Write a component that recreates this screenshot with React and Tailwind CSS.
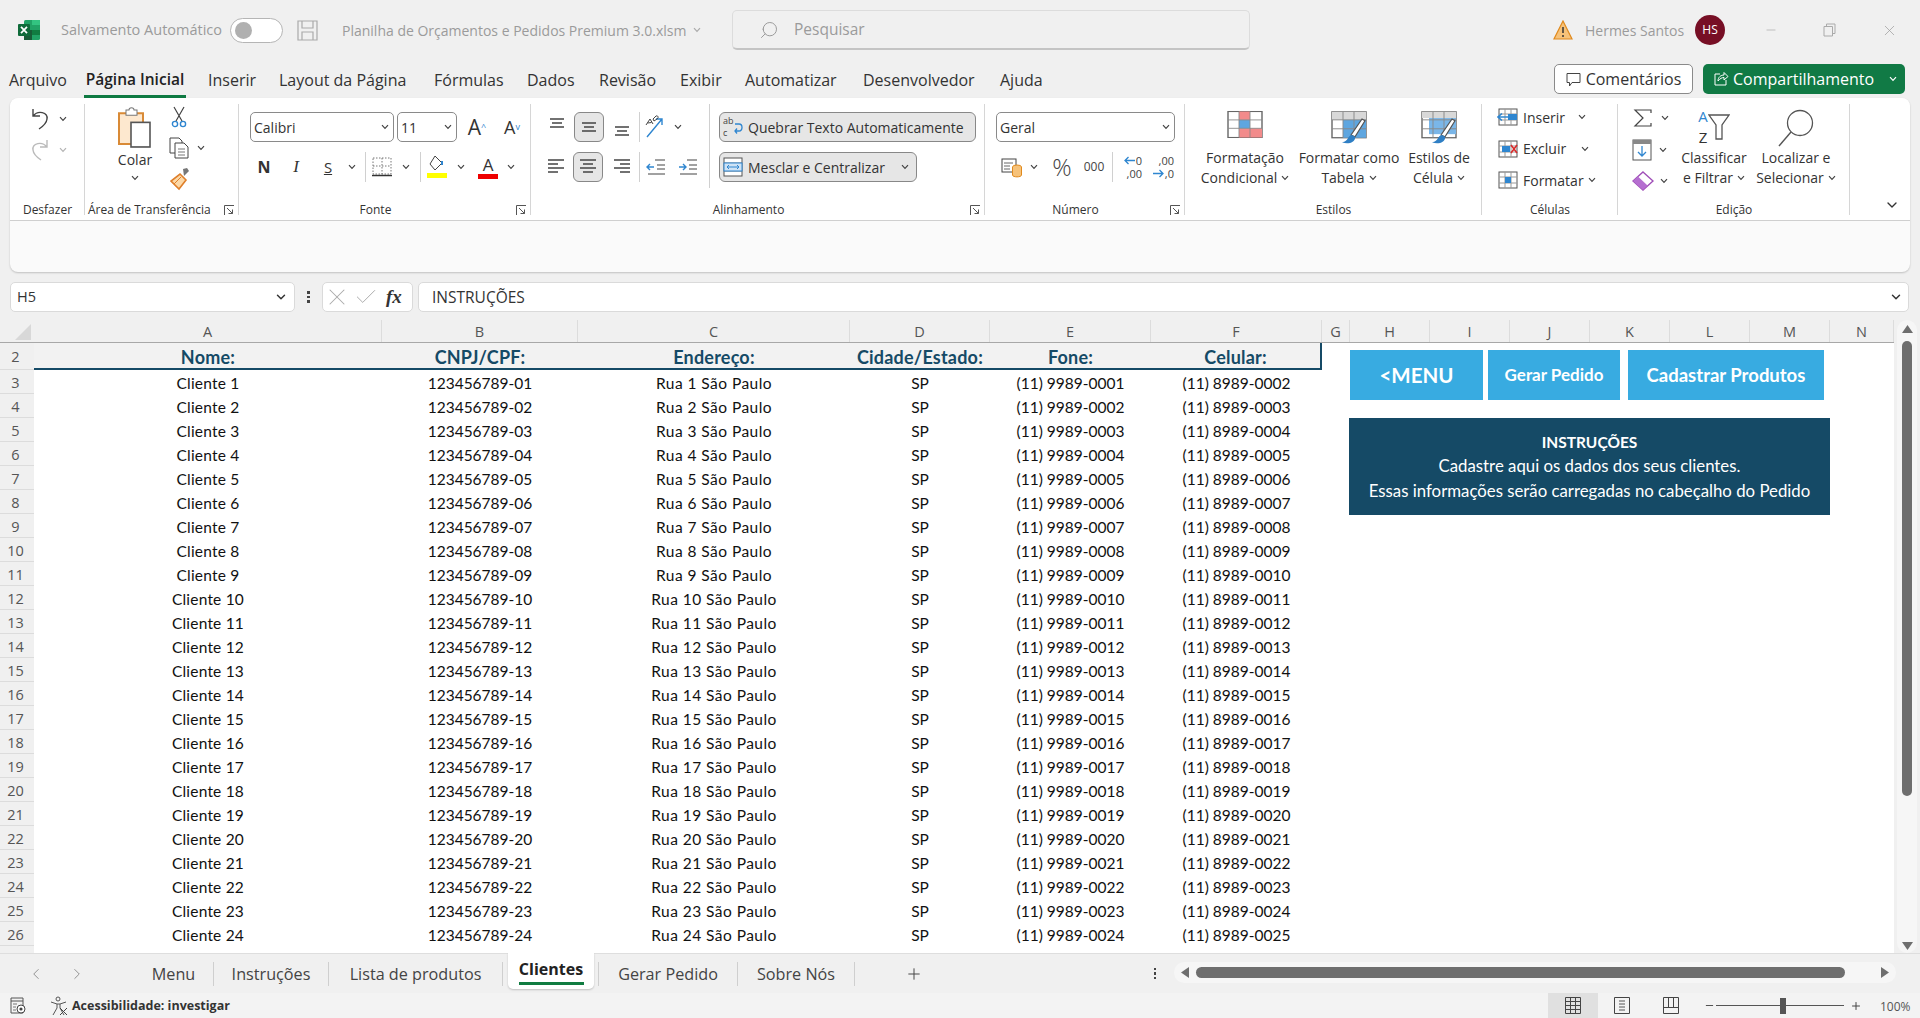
import { ChevronDown, ChevronLeft, ChevronRight, Plus, X, Check, Minus, Search } from "lucide-react";

const rows = Array.from({ length: 24 }, (_, i) => i + 1);
const pad = (n) => String(n).padStart(2, "0");
const pad4 = (n) => String(n).padStart(4, "0");

const colHeads = [
  ["A", "w-[348px]"],
  ["B", "w-[196px]"],
  ["C", "w-[272px]"],
  ["D", "w-[140px]"],
  ["E", "w-[161px]"],
  ["F", "w-[171px]"],
  ["G", "w-[28px]"],
  ["H", "w-[80px]"],
  ["I", "w-[80px]"],
  ["J", "w-[80px]"],
  ["K", "w-[80px]"],
  ["L", "w-[80px]"],
  ["M", "w-[80px]"],
  ["N", "w-[64px]"],
];

const Chev = ({ className = "" }) => (
  <svg width="8" height="6" viewBox="0 0 8 6" className={`shrink-0 ${className}`}>
    <path d="M1 1.2 L4 4.4 L7 1.2" fill="none" stroke="#444" strokeWidth="1.2" />
  </svg>
);

const Launcher = () => (
  <svg width="11" height="11" viewBox="0 0 11 11" className="shrink-0">
    <path d="M0.5 10 V0.5 H10 M3 3 L8.5 8.5 M8.5 4.5 V8.5 H4.5" fill="none" stroke="#555" strokeWidth="1" />
  </svg>
);

const Group = ({ w, label, launcher, left, children }) => (
  <div className={`${w} shrink-0 h-[111px] border-r border-[#d6d6d6]`}>
    <div className="h-[98px]">{children}</div>
    {left ? (
      <div className="h-[13px] flex items-start justify-between pl-[3px] pr-[3px] text-[12px] leading-[16px] text-[#333] whitespace-nowrap">
        <span>{label}</span>
        <span className="pt-[3px]"><Launcher /></span>
      </div>
    ) : (
      <div className="h-[13px] grid grid-cols-[1fr_auto_1fr] text-[12px] leading-[16px] text-[#333] whitespace-nowrap pr-[3px]">
        <span />
        {launcher ? <span className="mr-[15px]">{label}</span> : <span className="ml-[4px]">{label}</span>}
        {launcher ? <span className="justify-self-end pt-[3px]"><Launcher /></span> : <span />}
      </div>
    )}
  </div>
);

const Slot = ({ w, children, className = "" }) => (
  <div className={`${w} shrink-0 flex items-center justify-center ${className}`}>{children}</div>
);

const SelectBox = ({ w, label }) => (
  <div className={`${w} h-[30px] shrink-0 flex items-center justify-between pl-[3px] pr-[4px] bg-white border border-[#8a8a8a] rounded-[5px] text-[14px] text-[#333]`}>
    <span>{label}</span>
    <Chev />
  </div>
);

const Sep = ({ className = "" }) => <div className={`w-px h-[30px] bg-[#d0d0d0] shrink-0 ${className}`} />;

const LinesIcon = ({ align = "c", v = "c" }) => {
  const y0 = v === "t" ? 2 : v === "b" ? 10 : 6;
  if (v !== "n") {
    return (
      <svg width="20" height="20" viewBox="0 0 20 20">
        <path d={`M3 ${y0} H17 M5 ${y0 + 4} H15 M3 ${y0 + 8} H17`} stroke="#444" strokeWidth="1.3" />
      </svg>
    );
  }
  const s = align === "l" ? ["M2 3 H18", "M2 7 H12", "M2 11 H18", "M2 15 H12"] : align === "r" ? ["M2 3 H18", "M8 7 H18", "M2 11 H18", "M8 15 H18"] : ["M2 3 H18", "M5 7 H15", "M2 11 H18", "M5 15 H15"];
  return (
    <svg width="20" height="20" viewBox="0 0 20 20">
      <path d={s.join(" ")} stroke="#444" strokeWidth="1.3" />
    </svg>
  );
};

const TableIcon = ({ fillA, fillB, brush }) => (
  <svg width="38" height={brush ? 34 : 29} viewBox="0 0 38 38" preserveAspectRatio="none">
    <rect x="2" y="2" width="34" height={brush ? 29 : 34} fill="#fff" stroke="#666" strokeWidth="1.4" />
    {fillA}
    {fillB}
    <path d={brush ? "M2 11 H36 M2 21 H36 M13 2 V31 M24 2 V31" : "M2 13 H36 M2 24 H36 M13 2 V36 M24 2 V36"} stroke="#888" strokeWidth="1" fill="none" />
    {brush && <path d="M35 12 L25 30 L21 28 L32 10 Z" fill="#fff" stroke="#555" strokeWidth="1.2" />}
    {brush && <path d="M22 28 C17 29 19 35 12 36 C18 39 26 36 25 30 Z" fill="#2f7fc4" />}
  </svg>
);

const CellIcon = ({ kind }) => (
  <svg width="22" height="20" viewBox="0 0 22 20">
    <rect x="2" y="2" width="18" height="16" fill="#fff" stroke="#555" />
    <path d="M2 7 H20 M2 13 H20 M8 2 V18 M14 2 V18" stroke="#999" />
    {kind === "ins" && <path d="M1 10 H11 M5 6.5 L1 10 L5 13.5" stroke="#2f86d0" strokeWidth="1.6" fill="none" />}
    {kind === "ins" && <rect x="11" y="7" width="9" height="6" fill="#2f86d0" />}
    {kind === "del" && <rect x="5" y="7" width="8" height="6" fill="#2f86d0" />}
    {kind === "del" && <path d="M14 6 L20 14 M20 6 L14 14" stroke="#d92b2b" strokeWidth="1.6" />}
    {kind === "fmt" && <rect x="8" y="7" width="6" height="6" fill="#2f86d0" />}
  </svg>
);

const BigBtn = ({ w, icon, l1, l2 }) => (
  <div className={`${w} shrink-0 flex flex-col items-center text-[14px] leading-[20px] text-[#333] whitespace-nowrap`}>
    <div className="h-[44px] pt-[6px] flex items-start justify-center">{icon}</div>
    <div>{l1}</div>
    <div className="flex items-center gap-[4px]">{l2}<Chev /></div>
  </div>
);

const CellsRow = ({ kind, label, w }) => (
  <div className="h-[28px] flex items-center pl-[15px] text-[14px] text-[#333]">
    <div className="w-[22px] shrink-0"><CellIcon kind={kind} /></div>
    <div className={`${w} pl-[4px] shrink-0`}>{label}</div>
    <Chev />
  </div>
);

const ExcelLogo = () => (
  <svg width="22" height="20" viewBox="0 0 22 20">
    <rect x="6" y="0" width="16" height="20" rx="1.5" fill="#21a366" />
    <rect x="14" y="0" width="8" height="5" fill="#33c481" />
    <rect x="14" y="10" width="8" height="5" fill="#107c41" />
    <rect x="6" y="10" width="8" height="10" fill="#185c37" />
    <rect x="0" y="4" width="12" height="12" rx="1" fill="#0f6b3a" />
    <path d="M3 6.8 L9 13.2 M9 6.8 L3 13.2" stroke="#fff" strokeWidth="1.7" />
  </svg>
);

const TitleBar = () => (
  <div className="h-[60px] flex items-center text-[14.5px] text-[#9b9b9b] whitespace-nowrap">
    <div className="pl-[18px] w-[61px] shrink-0"><ExcelLogo /></div>
    <span className="w-[169px] shrink-0">Salvamento Automático</span>
    <div className="w-[53px] h-[25px] shrink-0 rounded-full border-[1.5px] border-[#b5b5b5] bg-white flex items-center pl-[4px]">
      <div className="w-[17px] h-[17px] rounded-full bg-[#b0b0b0]" />
    </div>
    <div className="ml-[14px] w-[28px] shrink-0">
      <svg width="21" height="21" viewBox="0 0 21 21">
        <path d="M1 1 H20 V20 H1 Z M5 1 V8 H16 V1 M5 20 V12 H16 V20" fill="none" stroke="#aaa" strokeWidth="1.2" />
      </svg>
    </div>
    <span className="ml-[17px] w-[344px] shrink-0 text-[14px]">Planilha de Orçamentos e Pedidos Premium 3.0.xlsm</span>
    <Chev className="ml-[7px] opacity-40" />
    <div className="ml-[31px] w-[518px] h-[40px] shrink-0 bg-[#f0f0f0] rounded-[5px] border border-[#dcdcdc] border-b-2 border-b-[#c4c4c4] flex items-center pl-[26px] text-[15.5px]">
      <Search size={20} strokeWidth={1.2} className="text-[#9b9b9b] scale-x-[-1]" />
      <span className="ml-[15px]">Pesquisar</span>
    </div>
    <svg width="20" height="20" viewBox="0 0 20 20" className="ml-[303px] shrink-0">
      <path d="M10 1 L19 19 H1 Z" fill="#f6c27a" stroke="#e08a1e" strokeWidth="1.2" />
      <path d="M10 7 V13 M10 15 V17" stroke="#333" strokeWidth="1.5" />
    </svg>
    <span className="ml-[12px] w-[110px] shrink-0 text-[14px]">Hermes Santos</span>
    <div className="w-[30px] h-[30px] shrink-0 rounded-full bg-[#770f25] text-white text-[12px] flex items-center justify-center">HS</div>
    <Slot w="w-[90px]"><Minus size={14} strokeWidth={1} className="text-[#9b9b9b] ml-[2px]" /></Slot>
    <Slot w="w-[28px]">
      <svg width="13" height="14" viewBox="0 0 13 14">
        <path d="M1 3.5 H9.5 V13 H1 Z M3.5 3 V1 H12 V10.5 H10" fill="none" stroke="#aaa" />
      </svg>
    </Slot>
    <Slot w="w-[92px]"><X size={17} strokeWidth={1} className="text-[#9b9b9b]" /></Slot>
  </div>
);

const MenuBar = () => (
  <div className="h-[38px] flex items-center text-[16px] text-[#333] whitespace-nowrap">
    <div className="w-[84px] pl-[9px] pt-[2px] shrink-0">Arquivo</div>
    <div className="w-[124px] shrink-0 h-[38px] flex items-center">
      <div className="w-[102px] h-[38px] flex items-center justify-center font-semibold border-b-[3px] border-[#0f7a42] pt-[4px] text-[#222] text-[15.5px]">Página Inicial</div>
    </div>
    <div className="w-[71px] pt-[2px] shrink-0">Inserir</div>
    <div className="w-[155px] pt-[2px] shrink-0">Layout da Página</div>
    <div className="w-[93px] pt-[2px] shrink-0">Fórmulas</div>
    <div className="w-[72px] pt-[2px] shrink-0">Dados</div>
    <div className="w-[81px] pt-[2px] shrink-0">Revisão</div>
    <div className="w-[65px] pt-[2px] shrink-0">Exibir</div>
    <div className="w-[118px] pt-[2px] shrink-0">Automatizar</div>
    <div className="w-[137px] pt-[2px] shrink-0">Desenvolvedor</div>
    <div className="w-[554px] pt-[2px] shrink-0">Ajuda</div>
    <div className="w-[139px] h-[30px] shrink-0 bg-white border border-[#8a8a8a] rounded-[5px] flex items-center justify-center gap-[5px]">
      <svg width="15" height="15" viewBox="0 0 15 15">
        <path d="M1 1.5 H14 V10.5 H6 L3.5 14 V10.5 H1 Z" fill="none" stroke="#444" />
      </svg>
      Comentários
    </div>
    <div className="ml-[10px] w-[202px] h-[30px] shrink-0 bg-[#117a45] rounded-[5px] text-white flex items-center pl-[10px]">
      <svg width="16" height="16" viewBox="0 0 16 16" className="shrink-0">
        <path d="M7 3 H2 V14 H13 V9 M5 10 C5 6 8 4 11 4 V1.5 L15 5.5 L11 9 V6.5 C9 6.5 7 7.5 5 10 Z" fill="none" stroke="#fff" />
      </svg>
      <span className="ml-[4px] w-[156px] shrink-0">Compartilhamento</span>
      <svg width="8" height="6" viewBox="0 0 8 6" className="shrink-0"><path d="M1 1.2 L4 4.4 L7 1.2" fill="none" stroke="#fff" strokeWidth="1.2" /></svg>
    </div>
  </div>
);

const DecimalIcon = ({ top, bottom, dir }) => (
  <div className="w-[26px] text-[11px] leading-[13px] text-[#444]">
    <div className="flex items-center justify-end gap-px">
      {dir === "up" && (
        <svg width="11" height="9" viewBox="0 0 11 9" className="shrink-0"><path d="M11 4.5 H1 M4.5 1 L1 4.5 L4.5 8" fill="none" stroke="#2f86d0" strokeWidth="1.3" /></svg>
      )}
      <span>{top}</span>
    </div>
    <div className="flex items-center justify-end gap-px">
      {dir === "down" && (
        <svg width="11" height="9" viewBox="0 0 11 9" className="shrink-0"><path d="M0 4.5 H10 M6.5 1 L10 4.5 L6.5 8" fill="none" stroke="#2f86d0" strokeWidth="1.3" /></svg>
      )}
      <span>{bottom}</span>
    </div>
  </div>
);

const Ribbon = () => (
  <div className="mx-[10px] w-[1900px] h-[174px] rounded-[8px] bg-[#fafafa] shadow-[0_1px_2px_rgba(0,0,0,0.2)] overflow-hidden">
    <div className="h-[123px] bg-white border-b border-[#cfcfcf] rounded-t-[8px] pt-[6px] flex text-[#333] whitespace-nowrap">
      {/* Desfazer */}
      <Group w="w-[75px]" label="Desfazer">
        <div className="pl-[19px] pt-[2px]">
          <div className="h-[26px] flex items-center">
            <svg width="22" height="24" viewBox="0 0 22 24"><path d="M4 2 V9 H11 M4 9 C9 3 19 5 18 12 C17.5 17 13 20 10 22" fill="none" stroke="#444" strokeWidth="1.4" /></svg>
            <Chev className="ml-[8px]" />
          </div>
          <div className="h-[26px] mt-[5px] flex items-center opacity-40">
            <svg width="22" height="24" viewBox="0 0 22 24"><path d="M18 2 V9 H11 M18 9 C13 3 3 5 4 12 C4.5 17 9 20 12 22" fill="none" stroke="#555" strokeWidth="1.4" /></svg>
            <Chev className="ml-[8px]" />
          </div>
        </div>
      </Group>
      {/* Area de transferencia */}
      <Group w="w-[154px]" label="Área de Transferência" left>
        <div className="flex">
          <div className="w-[80px] shrink-0 flex flex-col items-center text-[14px] pt-[3px] pl-[20px]">
            <svg width="36" height="41" viewBox="0 0 36 40" preserveAspectRatio="none">
              <path d="M2 6 H26 V36 H2 Z" fill="#fde8cf" stroke="#d98a36" strokeWidth="2" />
              <path d="M9 6 V3 H12 C12 0 17 0 17 3 H20 V8 H9 Z" fill="#fff" stroke="#777" />
              <rect x="14" y="15" width="19" height="24" fill="#fff" stroke="#555" strokeWidth="1.6" />
            </svg>
            <div className="mt-[2px] leading-[20px]">Colar</div>
            <Chev className="mt-[5px]" />
          </div>
          <div className="flex flex-col">
            <Slot w="w-[28px]" className="h-[26px]">
              <svg width="16" height="22" viewBox="0 0 16 22">
                <path d="M3 1 L11 15 M13 1 L5 15" stroke="#444" strokeWidth="1.2" />
                <circle cx="4" cy="18" r="2.6" fill="none" stroke="#2f86d0" strokeWidth="1.4" />
                <circle cx="12" cy="18" r="2.6" fill="none" stroke="#2f86d0" strokeWidth="1.4" />
              </svg>
            </Slot>
            <div className="flex items-center mt-[2px] h-[32px]">
              <Slot w="w-[28px]">
                <svg width="20" height="22" viewBox="0 0 20 22">
                  <path d="M1 1 H10 L13 4 V16 H1 Z" fill="#fff" stroke="#444" />
                  <path d="M6 6 H15 L19 10 V21 H6 Z" fill="#fff" stroke="#444" />
                  <path d="M9 12 H16 M9 15 H16 M9 18 H16" stroke="#777" />
                </svg>
              </Slot>
              <Chev className="ml-[4px]" />
            </div>
            <Slot w="w-[30px]" className="h-[30px]">
              <svg width="22" height="24" viewBox="0 0 22 24">
                <path d="M14 2 L18 1 L20 4 L15 9 Z" fill="#777" />
                <path d="M11 7 L17 13 L10 22 L2 14 Z" fill="#fcd9a8" stroke="#df7f2a" strokeWidth="1.6" />
                <path d="M5 17 L12 10" stroke="#df7f2a" />
              </svg>
            </Slot>
          </div>
        </div>
      </Group>
      {/* Fonte */}
      <Group w="w-[292px]" label="Fonte" launcher>
        <div className="pl-[11px] pt-[8px]">
          <div className="flex items-center">
            <SelectBox w="w-[144px]" label="Calibri" />
            <div className="ml-[3px]"><SelectBox w="w-[60px]" label="11" /></div>
            <div className="w-[35px] shrink-0 text-[21px] text-center leading-none pl-[5px]">A<sup className="text-[9px] text-[#2f86d0]">^</sup></div>
            <div className="w-[35px] shrink-0 text-[18px] text-center leading-none pl-[5px]">A<sup className="text-[9px] text-[#2f86d0]">v</sup></div>
          </div>
          <div className="flex items-center mt-[10px] h-[30px] text-[15px]">
            <Slot w="w-[28px]" className="font-bold text-[16px]">N</Slot>
            <Slot w="w-[36px]" className="italic font-['Liberation_Serif',serif] text-[17px]">I</Slot>
            <Slot w="w-[28px]" className="underline">S</Slot>
            <Slot w="w-[20px]"><Chev /></Slot>
            <Sep className="ml-[3px]" />
            <Slot w="w-[32px]">
              <svg width="20" height="20" viewBox="0 0 20 20">
                <path d="M1 1 H19 V17 H1 Z M1 9 H19 M10 1 V17" fill="none" stroke="#777" strokeDasharray="1.5 1.5" />
                <path d="M0 18.5 H20" stroke="#333" strokeWidth="1.5" />
              </svg>
            </Slot>
            <Slot w="w-[16px]"><Chev /></Slot>
            <Sep className="ml-[6px]" />
            <Slot w="w-[32px]">
              <svg width="22" height="24" viewBox="0 0 22 24">
                <path d="M9 1 L16 8 L9 15 L4 9 Z" fill="#fff" stroke="#444" />
                <path d="M16 6 V10" stroke="#2f86d0" strokeWidth="2" />
                <rect x="1" y="18" width="20" height="5" fill="#ffff00" />
              </svg>
            </Slot>
            <Slot w="w-[16px]"><Chev /></Slot>
            <Slot w="w-[38px]">
              <div className="flex flex-col items-center leading-none text-[17px]">
                A
                <div className="w-[20px] h-[5px] bg-[#ee0000] mt-[1px]" />
              </div>
            </Slot>
            <Chev />
          </div>
        </div>
      </Group>
      {/* Alinhamento */}
      <Group w="w-[454px]" label="Alinhamento" launcher>
        <div className="flex h-[84px]">
          <div className="w-[179px] shrink-0 border-r border-[#d0d0d0] pl-[10px] pt-[6px]">
            <div className="flex items-center h-[30px] mt-[2px]">
              <Slot w="w-[32px]"><LinesIcon v="t" /></Slot>
              <div className="w-[30px] h-[30px] shrink-0 mx-[1px] rounded-[6px] bg-[#e6e6e6] border border-[#888] flex items-center justify-center"><LinesIcon v="c" /></div>
              <Slot w="w-[32px]" className="pl-[2px]"><LinesIcon v="b" /></Slot>
              <Sep className="ml-[2px]" />
              <Slot w="w-[30px]">
                <svg width="22" height="24" viewBox="0 0 22 24">
                  <path d="M3 22 L18 4 M12 4 H18 V10" fill="none" stroke="#2f86d0" strokeWidth="1.4" />
                  <path d="M2 10 L6 4 L9 9 M3.5 8 L7.5 7.5 M9 4 L12 1 C14 0 15 3 13 4 L10 6 Z" fill="none" stroke="#444" strokeWidth="1" />
                </svg>
              </Slot>
              <Slot w="w-[16px]"><Chev /></Slot>
            </div>
            <div className="flex items-center h-[30px] mt-[10px]">
              <Slot w="w-[30px]"><LinesIcon v="n" align="l" /></Slot>
              <div className="w-[30px] h-[30px] shrink-0 mx-[2px] rounded-[6px] bg-[#e6e6e6] border border-[#888] flex items-center justify-center"><LinesIcon v="n" align="c" /></div>
              <Slot w="w-[32px]" className="pl-[2px]"><LinesIcon v="n" align="r" /></Slot>
              <Sep className="ml-[2px]" />
              <Slot w="w-[32px]">
                <svg width="20" height="18" viewBox="0 0 20 18">
                  <path d="M9 2 H19 M11 7 H19 M11 11 H19 M2 16 H19" stroke="#444" strokeWidth="1.2" />
                  <path d="M1 9 H8 M4 6 L1 9 L4 12" fill="none" stroke="#2f86d0" strokeWidth="1.4" />
                </svg>
              </Slot>
              <Slot w="w-[32px]">
                <svg width="20" height="18" viewBox="0 0 20 18">
                  <path d="M9 2 H19 M11 7 H19 M11 11 H19 M2 16 H19" stroke="#444" strokeWidth="1.2" />
                  <path d="M1 9 H8 M5 6 L8 9 L5 12" fill="none" stroke="#2f86d0" strokeWidth="1.4" />
                </svg>
              </Slot>
            </div>
          </div>
          <div className="pl-[7px] pt-[8px] flex flex-col gap-[10px] text-[14px]">
            <div className="ml-[2px] w-[257px] h-[30px] rounded-[6px] bg-[#e6e6e6] border border-[#888] flex items-center pl-[3px] gap-[5px]">
              <div className="w-[20px] shrink-0 flex items-center">
                <div className="text-[9px] leading-[12px] text-[#444] w-[11px] shrink-0">
                  <div>ab</div>
                  <div>c</div>
                </div>
                <svg width="9" height="14" viewBox="0 0 9 14" className="shrink-0"><path d="M1 11 H5 C9 11 9 4 5 4 H1 M3 8.5 L1 11 L3 13.5" fill="none" stroke="#2f86d0" strokeWidth="1.3" /></svg>
              </div>
              Quebrar Texto Automaticamente
            </div>
            <div className="ml-[2px] w-[198px] h-[30px] rounded-[6px] bg-[#e6e6e6] border border-[#888] flex items-center pl-[3px] gap-[5px]">
              <svg width="20" height="20" viewBox="0 0 20 20" className="shrink-0">
                <rect x="1" y="1" width="18" height="18" fill="#fff" stroke="#555" />
                <path d="M1 6 H19 M1 14 H19" stroke="#777" />
                <rect x="1" y="6" width="18" height="8" fill="#cfe3f5" stroke="#2f86d0" />
                <path d="M4 10 H16 M6 8 L4 10 L6 12 M14 8 L16 10 L14 12" fill="none" stroke="#2f86d0" />
              </svg>
              <span className="w-[148px] shrink-0">Mesclar e Centralizar</span>
              <Chev />
            </div>
          </div>
        </div>
      </Group>
      {/* Numero */}
      <Group w="w-[200px]" label="Número" launcher>
        <div className="pl-[11px] pt-[8px]">
          <SelectBox w="w-[179px]" label="Geral" />
          <div className="flex items-center mt-[10px] h-[30px] text-[#444]">
            <Slot w="w-[32px]">
              <svg width="22" height="22" viewBox="0 0 22 22">
                <rect x="1" y="3" width="14" height="13" fill="#fff" stroke="#444" />
                <path d="M3 7 H12 M3 10 H9 M3 13 H9" stroke="#666" />
                <ellipse cx="16" cy="11" rx="4.5" ry="2" fill="#f6c27a" stroke="#e08a1e" />
                <path d="M11.5 11 V19 C11.5 21.5 20.5 21.5 20.5 19 V11" fill="#f6c27a" stroke="#e08a1e" />
              </svg>
            </Slot>
            <Slot w="w-[12px]"><Chev /></Slot>
            <Slot w="w-[32px]" className="ml-[6px] text-[24px] font-light">%</Slot>
            <Slot w="w-[32px]" className="text-[12px]">000</Slot>
            <Sep className="ml-[2px]" />
            <Slot w="w-[32px]"><DecimalIcon top="0" bottom=",00" dir="up" /></Slot>
            <Slot w="w-[32px]"><DecimalIcon top=",00" bottom=",0" dir="down" /></Slot>
          </div>
        </div>
      </Group>
      {/* Estilos */}
      <Group w="w-[297px]" label="Estilos">
        <div className="flex">
          <BigBtn
            w="w-[120px]"
            l1="Formatação"
            l2="Condicional"
            icon={<TableIcon fillA={<rect x="13" y="2" width="11" height="11" fill="#f28b8b" />} fillB={<><rect x="13" y="24" width="23" height="12" fill="#f28b8b" /><rect x="13" y="13" width="11" height="11" fill="#5ea6e0" /></>} />}
          />
          <BigBtn
            w="w-[88px]"
            l1="Formatar como"
            l2="Tabela"
            icon={<TableIcon fillA={<rect x="2" y="2" width="34" height="9" fill="#d8d8d8" />} fillB={<rect x="13" y="11" width="23" height="20" fill="#5ea6e0" />} brush />}
          />
          <BigBtn
            w="w-[92px]"
            l1="Estilos de"
            l2="Célula"
            icon={<TableIcon fillA={<rect x="2" y="2" width="34" height="7" fill="#d8d8d8" />} fillB={<rect x="9" y="9" width="27" height="18" fill="#7ab6e8" />} brush />}
          />
        </div>
      </Group>
      {/* Celulas */}
      <Group w="w-[136px]" label="Células">
        <div className="flex flex-col gap-[3.5px] -translate-y-px">
          <CellsRow kind="ins" label="Inserir" w="w-[59px]" />
          <CellsRow kind="del" label="Excluir" w="w-[62px]" />
          <CellsRow kind="fmt" label="Formatar" w="w-[69px]" />
        </div>
      </Group>
      {/* Edicao */}
      <Group w="w-[232px]" label="Edição">
        <div className="flex">
          <div className="w-[52px] shrink-0 flex flex-col gap-[3.5px]">
            <div className="h-[28px] flex items-center pl-[14px]">
              <svg width="22" height="20" viewBox="0 0 22 20"><path d="M19 5 V2 H3 L11 10 L3 18 H19 V15" fill="none" stroke="#444" strokeWidth="1.2" /></svg>
              <Chev className="ml-[7px]" />
            </div>
            <div className="h-[28px] flex items-center pl-[14px]">
              <svg width="20" height="22" viewBox="0 0 20 22">
                <rect x="1" y="1" width="18" height="20" fill="#fff" stroke="#555" />
                <rect x="1" y="1" width="18" height="4" fill="#888" />
                <path d="M10 7 V17 M6 13 L10 17 L14 13" fill="none" stroke="#2f86d0" strokeWidth="1.3" />
              </svg>
              <Chev className="ml-[7px]" />
            </div>
            <div className="h-[28px] flex items-center pl-[14px]">
              <svg width="22" height="20" viewBox="0 0 22 20">
                <path d="M11 1 L21 10 L11 19 L1 10 Z" fill="#fff" stroke="#a04fb8" strokeWidth="1.4" />
                <path d="M6 5.5 L15.5 14.5 L11 19 L1 10 Z" fill="#b56fd0" />
              </svg>
              <Chev className="ml-[6px]" />
            </div>
          </div>
          <BigBtn
            w="w-[88px]"
            l1="Classificar"
            l2="e Filtrar"
            icon={
              <div className="flex items-center h-[38px] mt-[-2px] leading-none">
                <div className="flex flex-col items-center text-[15px] leading-[21px]">
                  <span className="text-[#2f86d0]">A</span>
                  <span>Z</span>
                </div>
                <svg width="22" height="26" viewBox="0 0 22 26"><path d="M1 1 H21 L14 11 V25 H8 V11 Z" fill="#fff" stroke="#555" strokeWidth="1.3" /></svg>
              </div>
            }
          />
          <BigBtn
            w="w-[76px]"
            l1="Localizar e"
            l2="Selecionar"
            icon={
              <svg width="38" height="38" viewBox="0 0 38 38" className="mt-[-1px]">
                <circle cx="23" cy="14" r="12.5" fill="#fff" stroke="#555" strokeWidth="1.3" />
                <path d="M14 23 L2 37" stroke="#555" strokeWidth="1.4" />
              </svg>
            }
          />
        </div>
      </Group>
      <div className="flex-1 h-[111px] flex items-end justify-end pr-[10px] pb-[2px]">
        <ChevronDown size={16} className="text-[#333]" />
      </div>
    </div>
  </div>
);

const FormulaBar = () => (
  <div className="h-[48px] pt-[10px] flex items-start text-[15.5px] text-[#333] shrink-0">
    <div className="ml-[10px] w-[285px] h-[30px] bg-white border border-[#dadada] rounded-[5px] flex items-center justify-between pl-[6px] pr-[6px] text-[14.5px]">
      <span>H5</span>
      <ChevronDown size={14} strokeWidth={2.5} />
    </div>
    <div className="w-[27px] h-[30px] flex flex-col items-center justify-center gap-[2px] shrink-0">
      <div className="w-[2.5px] h-[2.5px] bg-[#444]" />
      <div className="w-[2.5px] h-[2.5px] bg-[#444]" />
      <div className="w-[2.5px] h-[2.5px] bg-[#444]" />
    </div>
    <div className="w-[91px] h-[30px] bg-white border border-[#dadada] rounded-[5px] flex items-center shrink-0">
      <X size={28} strokeWidth={0.9} className="text-[#aaa] shrink-0" />
      <Check size={26} strokeWidth={0.9} className="text-[#aaa] shrink-0 ml-[2px]" />
      <span className="font-['Liberation_Serif',serif] italic font-semibold text-[19px] ml-[7px]">fx</span>
    </div>
    <div className="ml-[5px] w-[1491px] h-[30px] bg-white border border-[#dadada] rounded-[5px] flex items-center justify-between pl-[13px] pr-[5px] shrink-0">
      <span className="pt-px">INSTRUÇÕES</span>
      <ChevronDown size={14} strokeWidth={2.5} />
    </div>
  </div>
);

const RowHead = ({ children, h }) => (
  <div className={`w-[34px] ${h} shrink-0 bg-[#f0f0f0] border-b border-[#dcdcdc] text-[14.5px] text-[#555] flex items-center justify-center pr-[3px] pt-[2px] font-['Open_Sans',sans-serif] tracking-normal`}>
    {children}
  </div>
);

const Cell = ({ w, children, className = "" }) => <div className={`${w} shrink-0 text-center pt-[3px] ${className}`}>{children}</div>;

const Sheet = () => (
  <div className="h-[633px] relative flex shrink-0 overflow-hidden">
    <div className="w-[1894px] shrink-0 flex flex-col">
      <div className="h-[23px] flex shrink-0 border-b border-[#a8a8a8] bg-[#f0f0f0] text-[14.5px] text-[#555]">
        <div className="w-[34px] shrink-0 flex items-end justify-end pb-[2px] pr-[3px]">
          <svg width="16" height="16" viewBox="0 0 16 16"><path d="M16 0 V16 H0 Z" fill="#d8d8d8" /></svg>
        </div>
        {colHeads.map(([c, w]) => (
          <div key={c} className={`${w} shrink-0 text-center border-r border-[#dcdcdc] leading-[23px]`}>{c}</div>
        ))}
      </div>
      <div className="flex-1 flex flex-col bg-white font-['Lato',sans-serif] text-[15.5px] text-[#111]">
        <div className="flex h-[27px] shrink-0 items-center">
          <RowHead h="h-[27px]">2</RowHead>
          <div className="w-[1288px] h-[27px] shrink-0 flex items-center bg-[#f2f2f2] border-b-2 border-r-2 border-[#154a66] font-bold text-[#154a66] text-[18px] tracking-[0.2px]">
            <Cell w="w-[348px]">Nome:</Cell>
            <Cell w="w-[196px]">CNPJ/CPF:</Cell>
            <Cell w="w-[272px]">Endereço:</Cell>
            <Cell w="w-[140px]">Cidade/Estado:</Cell>
            <Cell w="w-[161px]">Fone:</Cell>
            <Cell w="w-[169px]">Celular:</Cell>
          </div>
        </div>
        {rows.map((i) => (
          <div key={i} className="flex h-[24px] shrink-0 items-center">
            <RowHead h="h-[24px]">{i + 2}</RowHead>
            <Cell w="w-[348px]" className="tracking-[0.2px]">Cliente {i}</Cell>
            <Cell w="w-[196px]">123456789-{pad(i)}</Cell>
            <Cell w="w-[272px]" className="tracking-[0.45px]">Rua {i} São Paulo</Cell>
            <Cell w="w-[140px]">SP</Cell>
            <Cell w="w-[161px]">(11) 9989-{pad4(i)}</Cell>
            <Cell w="w-[171px]">(11) 8989-{pad4(i + 1)}</Cell>
          </div>
        ))}
        <div className="flex flex-1">
          <div className="w-[34px] bg-[#f0f0f0]" />
        </div>
      </div>
    </div>
    {/* scrollbar vertical */}
    <div className="w-[26px] shrink-0 bg-[#f0f0f0] pl-[3px] pr-[3px]">
      <div className="h-[633px] bg-[#f6f6f6] rounded-full flex flex-col items-center pt-[5px] pb-[3px]">
        <svg width="11" height="8" viewBox="0 0 11 8"><path d="M5.5 0 L11 8 H0 Z" fill="#6e6e6e" /></svg>
        <div className="w-[10px] h-[455px] mt-[8px] bg-[#6e6e6e] rounded-full" />
        <div className="flex-1" />
        <svg width="11" height="8" viewBox="0 0 11 8"><path d="M5.5 8 L11 0 H0 Z" fill="#6e6e6e" /></svg>
      </div>
    </div>
    {/* formas flutuantes da planilha */}
    <div className="absolute left-[1349px] top-[30px] flex flex-col font-['Lato',sans-serif] text-white">
      <div className="flex pl-px font-bold">
        <div className="w-[133px] h-[50px] bg-[#38abe1] flex items-center justify-center text-[20.5px]">&lt;MENU</div>
        <div className="w-[132px] h-[50px] ml-[5px] bg-[#38abe1] flex items-center justify-center text-[17px]">Gerar Pedido</div>
        <div className="w-[196px] h-[50px] ml-[8px] pt-[2px] bg-[#38abe1] flex items-center justify-center text-[18.5px]">Cadastrar Produtos</div>
      </div>
      <div className="w-[481px] h-[97px] mt-[18px] bg-[#154a66] flex flex-col items-center justify-center text-[16.8px] leading-[24.5px]">
        <div className="font-bold text-[15.5px]">INSTRUÇÕES</div>
        <div>Cadastre aqui os dados dos seus clientes.</div>
        <div>Essas informações serão carregadas no cabeçalho do Pedido</div>
      </div>
    </div>
  </div>
);

const SheetTab = ({ w, children }) => (
  <div className={`${w} h-[24px] shrink-0 flex items-center justify-center border-r border-[#cfcfcf]`}>{children}</div>
);

const TabsBar = () => (
  <div className="h-[40px] shrink-0 flex items-start text-[16.2px] text-[#444] whitespace-nowrap border-t border-[#dedede]">
    <div className="w-[134px] shrink-0 h-[39px] flex items-center pl-[27px] text-[#888]">
      <ChevronLeft size={18} strokeWidth={1.2} />
      <ChevronRight size={18} strokeWidth={1.2} className="ml-[23px]" />
    </div>
    <div className="flex items-start pt-[8px]">
      <SheetTab w="w-[80px]">Menu</SheetTab>
      <SheetTab w="w-[115px]">Instruções</SheetTab>
      <SheetTab w="w-[174px]">Lista de produtos</SheetTab>
    </div>
    <div className="ml-[5px] mt-[-1px] w-[86px] h-[36px] shrink-0 bg-white rounded-b-[5px] shadow-[0_1px_2px_rgba(0,0,0,0.2)] flex flex-col items-center font-bold text-[#222] text-[16px]">
      <div className="pt-[4px] leading-[24px]">Clientes</div>
      <div className="w-[65px] h-[3px] bg-[#107c41] mt-[1px]" />
    </div>
    <div className="ml-[4px] flex items-start pt-[8px]">
      <div className="w-px h-[24px] bg-[#cfcfcf]" />
      <SheetTab w="w-[139px]">Gerar Pedido</SheetTab>
      <SheetTab w="w-[117px]">Sobre Nós</SheetTab>
    </div>
    <div className="w-[118px] h-[39px] flex items-center justify-center shrink-0">
      <Plus size={18} strokeWidth={1.3} />
    </div>
    <div className="ml-[-2px] w-[198px] shrink-0 h-[39px] flex flex-col items-center justify-center gap-[2px] pl-[170px]">
      <div className="w-[2.5px] h-[2.5px] bg-[#444]" />
      <div className="w-[2.5px] h-[2.5px] bg-[#444]" />
      <div className="w-[2.5px] h-[2.5px] bg-[#444]" />
    </div>
    <div className="ml-[5px] mt-[8px] w-[722px] h-[21px] shrink-0 bg-[#f6f6f6] rounded-full flex items-center pl-[7px]">
      <svg width="8" height="11" viewBox="0 0 8 11"><path d="M0 5.5 L8 0 V11 Z" fill="#6e6e6e" /></svg>
      <div className="ml-[7px] w-[649px] h-[11px] bg-[#6e6e6e] rounded-full" />
      <svg width="8" height="11" viewBox="0 0 8 11" className="ml-[36px]"><path d="M8 5.5 L0 0 V11 Z" fill="#6e6e6e" /></svg>
    </div>
  </div>
);

const StatusBar = () => (
  <div className="h-[25px] shrink-0 bg-[#f3f3f3] flex items-center text-[12px] text-[#333] whitespace-nowrap">
    <svg width="18" height="18" viewBox="0 0 18 18" className="ml-[10px] shrink-0">
      <path d="M1 1 H13 V16 H1 Z M1 4 H13" fill="none" stroke="#555" />
      <path d="M3 7 H7 M3 10 H6 M3 13 H6" stroke="#777" />
      <circle cx="11" cy="12" r="4" fill="#fff" stroke="#444" />
      <circle cx="11" cy="12" r="1.6" fill="#444" />
    </svg>
    <svg width="20" height="20" viewBox="0 0 20 20" className="ml-[21px] shrink-0">
      <circle cx="9" cy="3" r="2" fill="none" stroke="#555" />
      <path d="M2 6 L8 8 H11 L17 6 M8 8 V12 L4 19 M11 8 V12 L15 19" fill="none" stroke="#555" />
      <path d="M11 12 L18 19 M18 12 L11 19" stroke="#444" />
    </svg>
    <span className="ml-[3px] font-bold text-[12.5px] pt-[2px] w-[1476px] shrink-0">Acessibilidade: investigar</span>
    <div className="w-[50px] h-[25px] bg-[#e0e0e0] flex items-center justify-center shrink-0">
      <svg width="16" height="17" viewBox="0 0 16 17"><path d="M0.5 0.5 H15.5 V16.5 H0.5 Z M0.5 4.5 H15.5 M0.5 8.5 H15.5 M0.5 12.5 H15.5 M5.5 0.5 V16.5 M10.5 0.5 V16.5" fill="none" stroke="#444" /></svg>
    </div>
    <Slot w="w-[48px]">
      <svg width="16" height="17" viewBox="0 0 16 17"><path d="M0.5 0.5 H15.5 V16.5 H0.5 Z" fill="none" stroke="#444" /><path d="M5 4 H11 M5 7 H11 M5 10 H11 M5 13 H11" stroke="#555" /></svg>
    </Slot>
    <Slot w="w-[50px]">
      <svg width="16" height="17" viewBox="0 0 16 17"><path d="M0.5 0.5 H15.5 V16.5 H0.5 Z M0.5 10.5 H15.5 M5.5 0.5 V10.5 M10.5 0.5 V10.5" fill="none" stroke="#444" /></svg>
    </Slot>
    <Minus size={11} className="ml-[8px] shrink-0 text-[#444]" />
    <div className="ml-[1px] w-[128px] h-[1px] bg-[#555] flex items-center pl-[64px] shrink-0">
      <div className="w-[6px] h-[16px] bg-[#555] shrink-0" />
    </div>
    <Plus size={12} className="ml-[6px] shrink-0 text-[#444]" />
    <span className="ml-[18px] pt-[2px] text-[#555]">100%</span>
  </div>
);

export default function App() {
  return (
    <div className="w-[1920px] h-[1018px] overflow-hidden flex flex-col bg-[#f0f0f0] font-['Open_Sans',sans-serif]">
      <TitleBar />
      <MenuBar />
      <Ribbon />
      <FormulaBar />
      <Sheet />
      <TabsBar />
      <StatusBar />
    </div>
  );
}
